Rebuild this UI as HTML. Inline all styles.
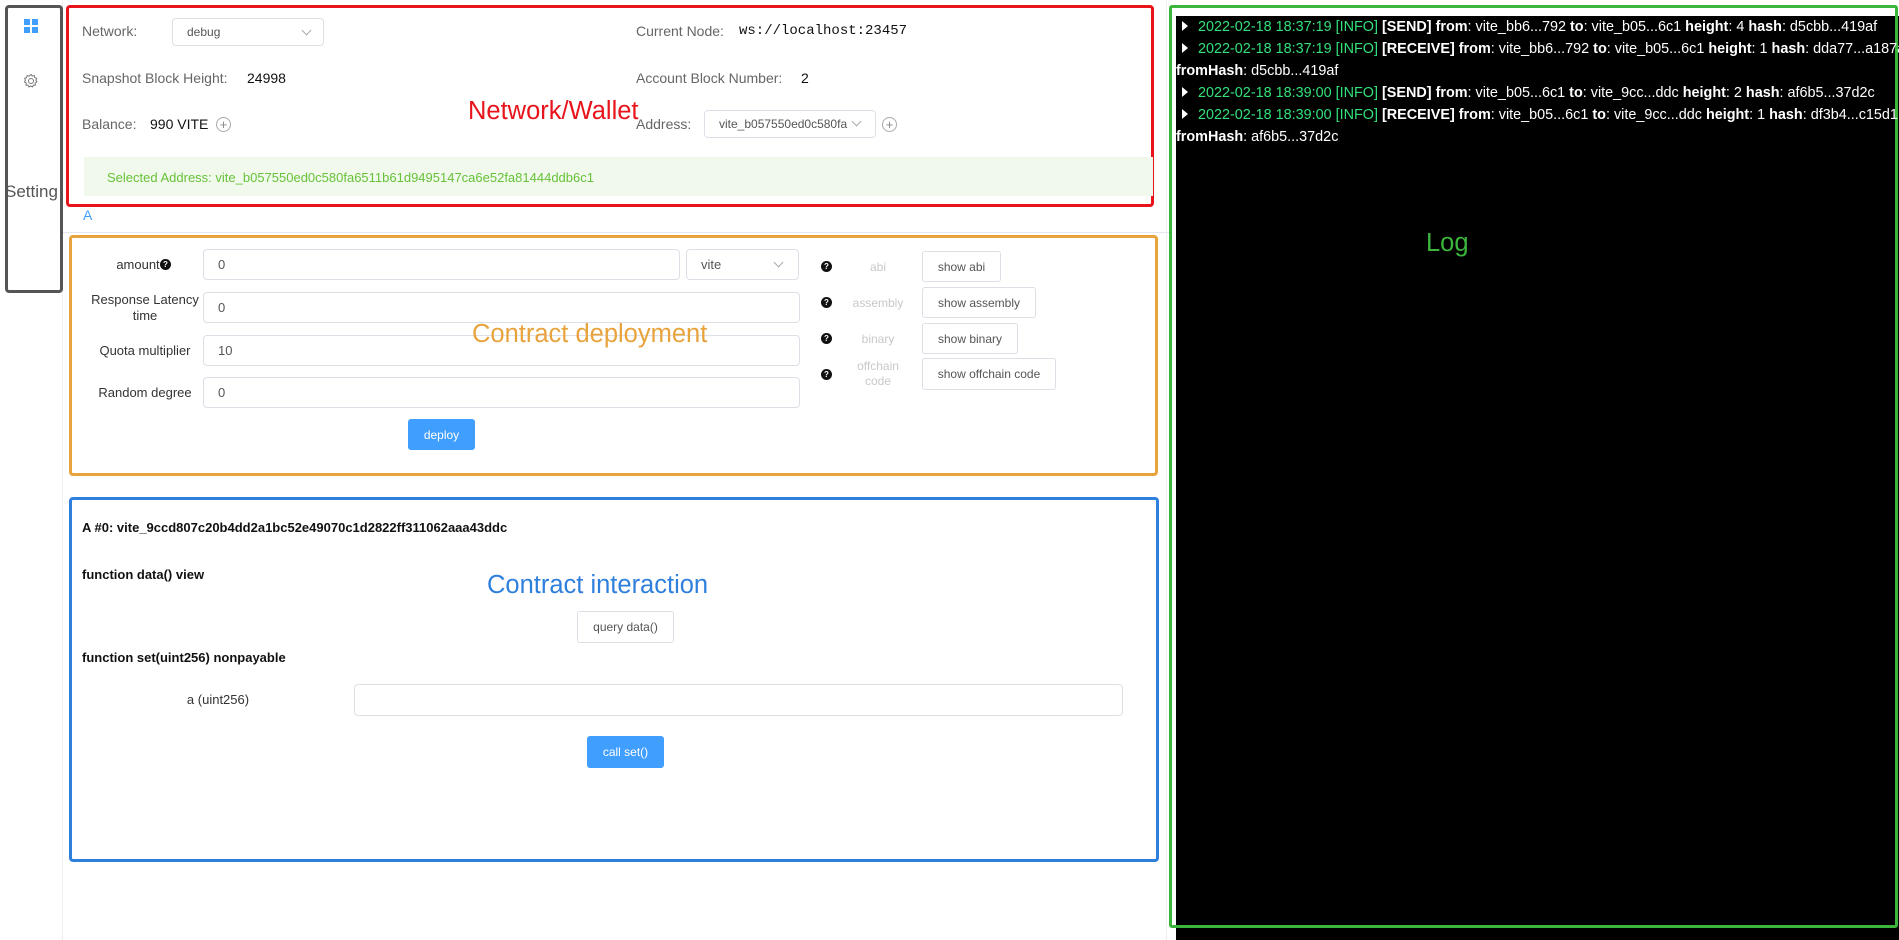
<!DOCTYPE html>
<html><head><meta charset="utf-8"><style>
*{box-sizing:border-box;margin:0;padding:0}
body{width:1899px;height:940px;position:relative;overflow:hidden;background:#fff;font-family:"Liberation Sans",Arial,sans-serif;color:#333;font-size:14px}
.a{position:absolute;white-space:nowrap}
.box{position:absolute;border-radius:4px}
.inp{position:absolute;border:1px solid #dcdfe6;border-radius:4px;background:#fff;font-size:13px;padding-left:14px;display:flex;align-items:center;color:#555}
.btn{position:absolute;border:1px solid #dcdfe6;border-radius:3px;background:#fff;font-size:12px;color:#555;display:flex;align-items:center;justify-content:center}
.pb{position:absolute;background:#409eff;color:#fff;border-radius:3px;font-size:12px;display:flex;align-items:center;justify-content:center}
.q{position:absolute;width:11px;height:11px;border-radius:50%;background:#111;color:#fff;font-size:8px;font-weight:bold;text-align:center;line-height:11px}
.lbl{position:absolute;font-size:13px;color:#333;text-align:center}
.gl{position:absolute;font-size:12px;color:#c8c8c8;text-align:center}
.chev{position:absolute;width:7px;height:7px;border-right:1px solid #aaa;border-bottom:1px solid #aaa;transform:rotate(45deg)}
.plus{position:absolute;width:15px;height:15px;border:1px solid #aaa;border-radius:50%;color:#888;font-size:13px;line-height:13px;text-align:center}
.log{position:absolute;left:1176px;font-size:14.4px;color:#fff;white-space:nowrap;font-family:"Liberation Sans",Arial,sans-serif}
.log b{font-weight:bold}.g{color:#33e07a}
.tri{display:inline-block;width:0;height:0;border-left:6px solid #fff;border-top:5px solid transparent;border-bottom:5px solid transparent;margin:0 10px 0 6px}
</style></head><body>
<div class="a" style="left:62px;top:0;width:1px;height:940px;background:#eee"></div>
<div class="box" style="left:5px;top:5px;width:58px;height:288px;border:3px solid #555"></div>
<svg class="a" style="left:24px;top:19px" width="14" height="14"><rect x="0" y="0" width="6" height="6" fill="#409eff"/><rect x="8" y="0" width="6" height="6" fill="#409eff"/><rect x="0" y="8" width="6" height="6" fill="#409eff"/><rect x="8" y="8" width="6" height="6" fill="#409eff"/></svg>
<svg class="a" style="left:23px;top:73px" width="16" height="16" viewBox="0 0 16 16"><circle cx="8" cy="8" r="2.5" fill="none" stroke="#777" stroke-width="1"/><path d="M8 1.5l1.3 1.6 2-.5.5 2 1.9.8-.8 1.9 1 1.7-1.7 1 .2 2-2 .2-1 1.7-1.7-1-1.7 1-1-1.7-2-.2.2-2-1.7-1 1-1.7-.8-1.9 1.9-.8.5-2 2 .5z" fill="none" stroke="#777" stroke-width="1"/></svg>
<div class="a" style="left:5px;top:182px;font-size:17px;color:#555">Setting</div>

<div class="box" style="left:66px;top:5px;width:1088px;height:202px;border:3px solid #e8131b"></div>
<div class="a" style="left:82px;top:23px;color:#666">Network:</div>
<div class="inp" style="left:172px;top:18px;width:152px;height:28px;font-size:12px">debug</div><div class="chev" style="left:303px;top:27px"></div>
<div class="a" style="left:636px;top:23px;color:#666">Current Node:</div>
<div class="a" style="left:739px;top:23px;font-family:'Liberation Mono',monospace;font-size:14px;color:#111">ws://localhost:23457</div>
<div class="a" style="left:82px;top:70px;color:#666">Snapshot Block Height:</div>
<div class="a" style="left:247px;top:70px;color:#111">24998</div>
<div class="a" style="left:636px;top:70px;color:#666">Account Block Number:</div>
<div class="a" style="left:801px;top:70px;color:#111">2</div>
<div class="a" style="left:82px;top:116px;color:#666">Balance:</div>
<div class="a" style="left:150px;top:116px;color:#111">990 VITE</div>
<div class="plus" style="left:216px;top:117px">+</div>
<div class="a" style="left:468px;top:97px;font-size:25.5px;color:#e8131b">Network/Wallet</div>
<div class="a" style="left:636px;top:116px;color:#666">Address:</div>
<div class="inp" style="left:704px;top:110px;width:172px;height:28px;font-size:12px;overflow:hidden">vite_b057550ed0c580fa</div><div class="chev" style="left:853px;top:118px"></div>
<div class="plus" style="left:882px;top:117px">+</div>
<div class="a" style="left:84px;top:157px;width:1069px;height:39px;background:#f0f9eb"></div>
<div class="a" style="left:107px;top:170px;font-size:13px;color:#67c23a">Selected Address: vite_b057550ed0c580fa6511b61d9495147ca6e52fa81444ddb6c1</div>
<div class="a" style="left:83px;top:207px;color:#409eff;font-size:14px">A</div>
<div class="a" style="left:63px;top:232px;width:1108px;height:1px;background:#e4e7ed"></div>

<div class="box" style="left:69px;top:235px;width:1089px;height:241px;border:3px solid #e8a33d"></div>
<div class="lbl" style="left:88px;top:257px;width:100px">amount</div><div class="q" style="left:160px;top:259px">?</div>
<div class="inp" style="left:203px;top:249px;width:477px;height:31px">0</div>
<div class="inp" style="left:686px;top:249px;width:113px;height:31px">vite</div><div class="chev" style="left:775px;top:259px"></div>
<div class="lbl" style="left:85px;top:292px;width:120px;line-height:16px">Response Latency<br>time</div>
<div class="inp" style="left:203px;top:292px;width:597px;height:31px">0</div>
<div class="lbl" style="left:85px;top:343px;width:120px">Quota multiplier</div>
<div class="inp" style="left:203px;top:335px;width:597px;height:31px">10</div>
<div class="lbl" style="left:85px;top:385px;width:120px">Random degree</div>
<div class="inp" style="left:203px;top:377px;width:597px;height:31px">0</div>
<div class="pb" style="left:408px;top:419px;width:67px;height:31px">deploy</div>
<div class="a" style="left:472px;top:320px;font-size:25.5px;color:#e8a33d">Contract deployment</div>
<div class="q" style="left:821px;top:261px">?</div><div class="gl" style="left:848px;top:260px;width:60px">abi</div>
<div class="btn" style="left:922px;top:251px;width:79px;height:31px">show abi</div>
<div class="q" style="left:821px;top:297px">?</div><div class="gl" style="left:848px;top:296px;width:60px">assembly</div>
<div class="btn" style="left:922px;top:287px;width:114px;height:31px">show assembly</div>
<div class="q" style="left:821px;top:333px">?</div><div class="gl" style="left:848px;top:332px;width:60px">binary</div>
<div class="btn" style="left:922px;top:323px;width:96px;height:31px">show binary</div>
<div class="q" style="left:821px;top:369px">?</div><div class="gl" style="left:848px;top:359px;width:60px;line-height:15px">offchain<br>code</div>
<div class="btn" style="left:922px;top:358px;width:134px;height:32px">show offchain code</div>

<div class="box" style="left:69px;top:497px;width:1090px;height:365px;border:3px solid #2f7fdc"></div>
<div class="a" style="left:82px;top:520px;font-size:13px;font-weight:bold;color:#111">A #0: vite_9ccd807c20b4dd2a1bc52e49070c1d2822ff311062aaa43ddc</div>
<div class="a" style="left:82px;top:567px;font-size:13px;font-weight:bold;color:#111">function data() view</div>
<div class="a" style="left:487px;top:571px;font-size:25.5px;color:#2f7fdc">Contract interaction</div>
<div class="btn" style="left:577px;top:611px;width:97px;height:32px">query data()</div>
<div class="a" style="left:82px;top:650px;font-size:13px;font-weight:bold;color:#111">function set(uint256) nonpayable</div>
<div class="lbl" style="left:160px;top:692px;width:116px">a (uint256)</div>
<div class="inp" style="left:354px;top:684px;width:769px;height:32px"></div>
<div class="pb" style="left:587px;top:736px;width:77px;height:32px">call set()</div>

<div class="a" style="left:1166px;top:0;width:1px;height:940px;background:#eee"></div>
<div class="a" style="left:1176px;top:16px;width:723px;height:924px;background:#000"></div>
<div class="box" style="left:1169px;top:5px;width:729px;height:923px;border:3px solid #3cb53c;border-radius:3px"></div>
<div class="log" style="top:19px"><span class="tri"></span><span class="g">2022-02-18 18:37:19 [INFO]</span> <b>[SEND] from</b>: vite_bb6...792 <b>to</b>: vite_b05...6c1 <b>height</b>: 4 <b>hash</b>: d5cbb...419af</div>
<div class="log" style="top:41px"><span class="tri"></span><span class="g">2022-02-18 18:37:19 [INFO]</span> <b>[RECEIVE] from</b>: vite_bb6...792 <b>to</b>: vite_b05...6c1 <b>height</b>: 1 <b>hash</b>: dda77...a187a</div>
<div class="log" style="top:63px"><b>fromHash</b>: d5cbb...419af</div>
<div class="log" style="top:85px"><span class="tri"></span><span class="g">2022-02-18 18:39:00 [INFO]</span> <b>[SEND] from</b>: vite_b05...6c1 <b>to</b>: vite_9cc...ddc <b>height</b>: 2 <b>hash</b>: af6b5...37d2c</div>
<div class="log" style="top:107px"><span class="tri"></span><span class="g">2022-02-18 18:39:00 [INFO]</span> <b>[RECEIVE] from</b>: vite_b05...6c1 <b>to</b>: vite_9cc...ddc <b>height</b>: 1 <b>hash</b>: df3b4...c15d1</div>
<div class="log" style="top:129px"><b>fromHash</b>: af6b5...37d2c</div>
<div class="a" style="left:1426px;top:229px;font-size:25.5px;color:#3cb53c">Log</div>
</body></html>
